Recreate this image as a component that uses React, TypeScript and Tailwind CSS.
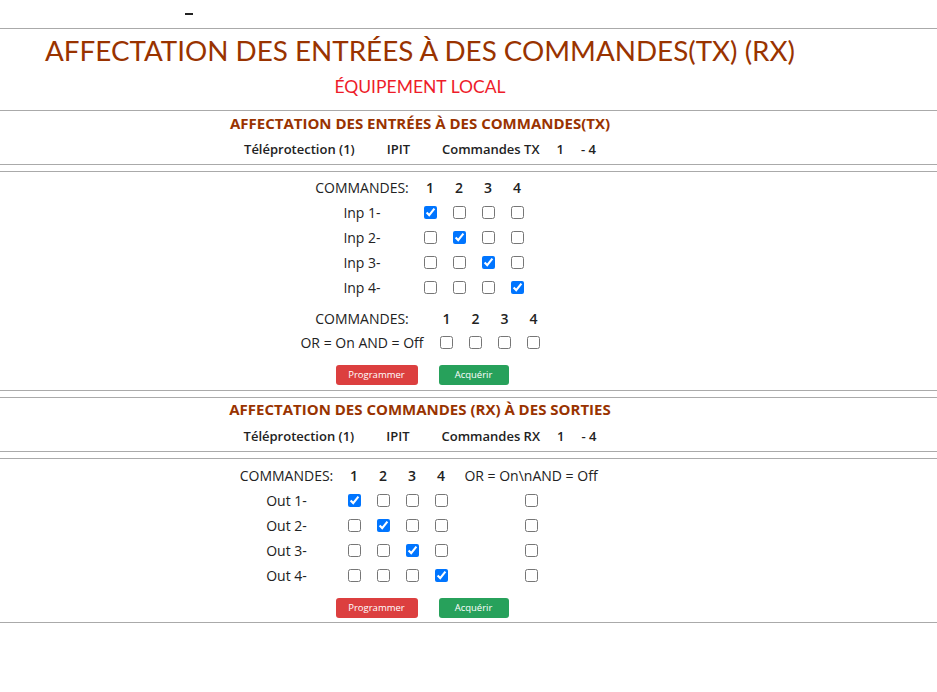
import React from "react";

const body = { fontFamily: '"Open Sans", "Noto Sans", sans-serif' };
const lato = { fontFamily: 'Lato, "Open Sans", sans-serif' };

function CB({ checked }: { checked?: boolean }) {
  return (
    <input
      type="checkbox"
      defaultChecked={checked}
      className="m-0 h-[13px] w-[13px]"
    />
  );
}

function Line() {
  return <div className="h-px w-full bg-[#aaaaaa]" />;
}

function Buttons() {
  return (
    <div className="ml-[4px] flex h-[20px] items-center justify-center gap-[21px]">
      <button className="flex h-[20px] w-[82px] items-center justify-center rounded-[3px] bg-[#dc3f3f] text-[9.5px] font-medium text-white">
        Programmer
      </button>
      <button className="flex h-[20px] w-[70px] items-center justify-center rounded-[3px] bg-[#27a15b] text-[9.5px] font-medium text-white">
        Acquérir
      </button>
    </div>
  );
}

function Info({ kind }: { kind: string }) {
  return (
    <div className="flex items-center justify-center text-[13px] font-semibold text-[#222]">
      <span>Téléprotection (1)</span>
      <span className="ml-[32px]">IPIT</span>
      <span className="ml-[32px]">Commandes {kind}</span>
      <span className="ml-[17px]">1</span>
      <span className="ml-[17px]">- 4</span>
    </div>
  );
}

export default function App() {
  const nums = [1, 2, 3, 4];
  return (
    <div className="w-[937px] bg-white text-[#222]" style={body}>
      {/* top */}
      <div className="relative h-[28px]">
        <span className="absolute left-[185px] top-[13px] block h-[2px] w-[8px] bg-[#222]" />
      </div>
      <Line />
      <div className="w-[840px] text-center" style={lato}>
        <div className="mt-[4px] text-[27.8px] leading-[36px] text-[#993300]">
          AFFECTATION DES ENTRÉES À DES COMMANDES(TX) (RX)
        </div>
        <div className="mt-[6px] h-[35px] text-[17.5px] leading-[24px] text-[#ee1c2a]">
          ÉQUIPEMENT LOCAL
        </div>
      </div>
      <Line />

      {/* Section TX */}
      <div className="w-[840px]">
        <div className="flex h-[24px] items-center justify-center text-[15px] font-bold text-[#993300]">
          AFFECTATION DES ENTRÉES À DES COMMANDES(TX)
        </div>
        <div className="flex h-[28px] items-center justify-center pt-[2px]">
          <Info kind="TX" />
        </div>
        <div className="h-px" />
      </div>
      <Line />
      <div className="h-[6px]" />
      <Line />
      <div className="w-[840px]">
        <div className="h-[3px]" />
        <div className="mx-auto w-[223px] text-[14px]">
          <div className="flex h-[25px] items-center">
            <div className="w-[107px] text-center">COMMANDES:</div>
            {nums.map((n) => (
              <div key={n} className="w-[29px] text-center font-semibold">
                {n}
              </div>
            ))}
          </div>
          {nums.map((r) => (
            <div key={r} className="flex h-[25px] items-center">
              <div className="w-[107px] text-center">Inp {r}-</div>
              {nums.map((c) => (
                <div key={c} className="flex w-[29px] justify-center">
                  <CB checked={r === c} />
                </div>
              ))}
            </div>
          ))}
        </div>
        <div className="h-[6px]" />
        <div className="mx-auto w-[256px] text-[14px]">
          <div className="flex h-[24px] items-center">
            <div className="w-[140px] text-center">COMMANDES:</div>
            {nums.map((n) => (
              <div key={n} className="w-[29px] text-center font-semibold">
                {n}
              </div>
            ))}
          </div>
          <div className="flex h-[24px] items-center">
            <div className="w-[140px] text-center">OR = On AND = Off</div>
            {nums.map((c) => (
              <div key={c} className="flex w-[29px] justify-center">
                <CB />
              </div>
            ))}
          </div>
        </div>
        <div className="h-[11px]" />
        <Buttons />
        <div className="h-[5px]" />
      </div>
      <Line />
      <div className="h-[6px]" />
      <Line />

      {/* Section RX */}
      <div className="w-[840px]">
        <div className="flex h-[23px] items-center justify-center text-[15px] font-bold text-[#993300]">
          AFFECTATION DES COMMANDES (RX) À DES SORTIES
        </div>
        <div className="flex h-[29px] items-center justify-center pt-[3px]">
          <Info kind="RX" />
        </div>
        <div className="h-px" />
      </div>
      <Line />
      <div className="h-[6px]" />
      <Line />
      <div className="w-[840px]">
        <div className="h-[4px]" />
        <div className="mx-auto w-[373px] text-[14px]">
          <div className="flex h-[25px] items-center">
            <div className="w-[106px] text-center">COMMANDES:</div>
            {nums.map((n) => (
              <div key={n} className="w-[29px] text-center font-semibold">
                {n}
              </div>
            ))}
            <div className="w-[151px] text-center">OR = On\nAND = Off</div>
          </div>
          {nums.map((r) => (
            <div key={r} className="flex h-[25px] items-center">
              <div className="w-[106px] text-center">Out {r}-</div>
              {nums.map((c) => (
                <div key={c} className="flex w-[29px] justify-center">
                  <CB checked={r === c} />
                </div>
              ))}
              <div className="flex w-[151px] justify-center">
                <CB />
              </div>
            </div>
          ))}
        </div>
        <div className="h-[10px]" />
        <Buttons />
        <div className="h-[4px]" />
      </div>
      <Line />
      <div className="h-[70px]" />
    </div>
  );
}
